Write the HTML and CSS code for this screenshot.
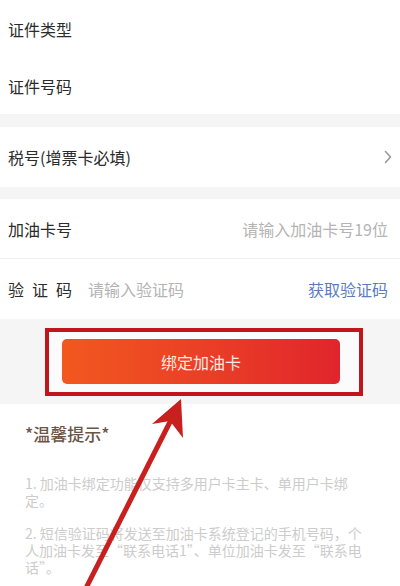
FILE: index.html
```html
<!DOCTYPE html>
<html lang="zh-CN">

<head>
    <meta charset="UTF-8">
    <meta name="viewport" content="width=device-width, initial-scale=1.0">
    <title>绑定加油卡</title>
    <link rel="stylesheet" href="styles.css">
</head>

<body>
    <div class="group first">
        <div class="row">
            <span class="label">证件类型</span>
        </div>
        <div class="row">
            <span class="label">证件号码</span>
        </div>
    </div>

    <div class="group">
        <div class="row tall">
            <span class="label">税号(增票卡必填)</span>
            <svg class="chevron" width="8" height="14" viewBox="0 0 8 14">
                <path d="M1.5 1.5 L6.5 7 L1.5 12.5" fill="none" stroke="#999" stroke-width="1.6" stroke-linecap="round" stroke-linejoin="round"/>
            </svg>
        </div>
    </div>

    <div class="group last">
        <div class="row tall line">
            <span class="label">加油卡号</span>
            <span class="placeholder">请输入加油卡号19位</span>
        </div>
        <div class="row tall">
            <span class="label spaced">验证码</span>
            <span class="placeholder grow">请输入验证码</span>
            <a class="code-link" href="#">获取验证码</a>
        </div>
    </div>

    <div class="action">
        <div class="highlight">
            <button class="bind-btn">绑定加油卡</button>
        </div>
    </div>

    <div class="tips">
        <div class="tips-title">*温馨提示*</div>
        <p>1. 加油卡绑定功能仅支持多用户卡主卡、单用户卡绑定。</p>
        <p>2. 短信验证码将发送至加油卡系统登记的手机号码，个人加油卡发至“联系电话1”、单位加油卡发至“联系电话”。</p>
    </div>

    <!-- annotation arrow drawn over the page -->
    <svg class="arrow" width="400" height="586" viewBox="0 0 400 586">
        <line x1="84" y1="592" x2="172" y2="418" stroke="#c8201e" stroke-width="5"/>
        <polygon points="181,399 183,438 170,421 152,424" fill="#c8201e"/>
    </svg>
</body>

</html>
```

FILE: styles.css
```css
body {
    margin: 0;
    padding: 0;
    background-color: #f5f5f5;
    font-family: "Noto Sans CJK SC", "Noto Sans", sans-serif;
    color: #333;
    position: relative;
    height: 586px;
    overflow: hidden;
}

.group {
    background-color: #fff;
    margin-bottom: 12px;
}

.group.first {
    margin-bottom: 13px;
}

.group.last {
    margin-bottom: 0;
}

.row {
    display: flex;
    align-items: center;
    height: 57px;
    padding: 0 10px 0 8px;
}

.row.tall {
    height: 60px;
}

.row.line {
    height: 59px;
    border-bottom: 1px solid #eeeeee;
}

.label {
    font-size: 16px;
    color: #2b2b2b;
}

.label.spaced {
    letter-spacing: 8px;
    margin-right: 8px;
}

.chevron {
    margin-left: auto;
    margin-right: -2px;
}

.placeholder {
    margin-left: auto;
    font-size: 16px;
    color: #b4b4b4;
    margin-right: 2px;
}

.placeholder.grow {
    margin-left: 0;
    flex: 1;
}

.code-link {
    font-size: 16px;
    color: #5b7cc0;
    text-decoration: none;
    margin-right: 2px;
}

.action {
    padding: 9px 0 8px 45px;
}

.highlight {
    width: 278px;
    border: 4px solid #c0161b;
    padding: 7px 19px 8px 13px;
    background-color: #fbfbfb;
}

.bind-btn {
    display: block;
    width: 278px;
    height: 45px;
    border: none;
    border-radius: 5px;
    background: linear-gradient(90deg, #f2581f 0%, #ea4026 50%, #e0252c 100%);
    color: #fde9e4;
    font-family: "Noto Sans CJK SC", "Noto Sans", sans-serif;
    font-size: 16px;
    padding: 0;
}

.tips {
    background-color: #fff;
    padding: 18px 25px 20px 25px;
    min-height: 200px;
}

.tips-title {
    font-size: 17px;
    line-height: 24px;
    font-weight: 500;
    color: #6b5548;
    margin-bottom: 29px;
}

.tips p {
    margin: 0 0 16px 0;
    font-size: 14px;
    line-height: 17px;
    color: #cccccc;
}

.arrow {
    position: absolute;
    top: 0;
    left: 0;
    pointer-events: none;
}
```
